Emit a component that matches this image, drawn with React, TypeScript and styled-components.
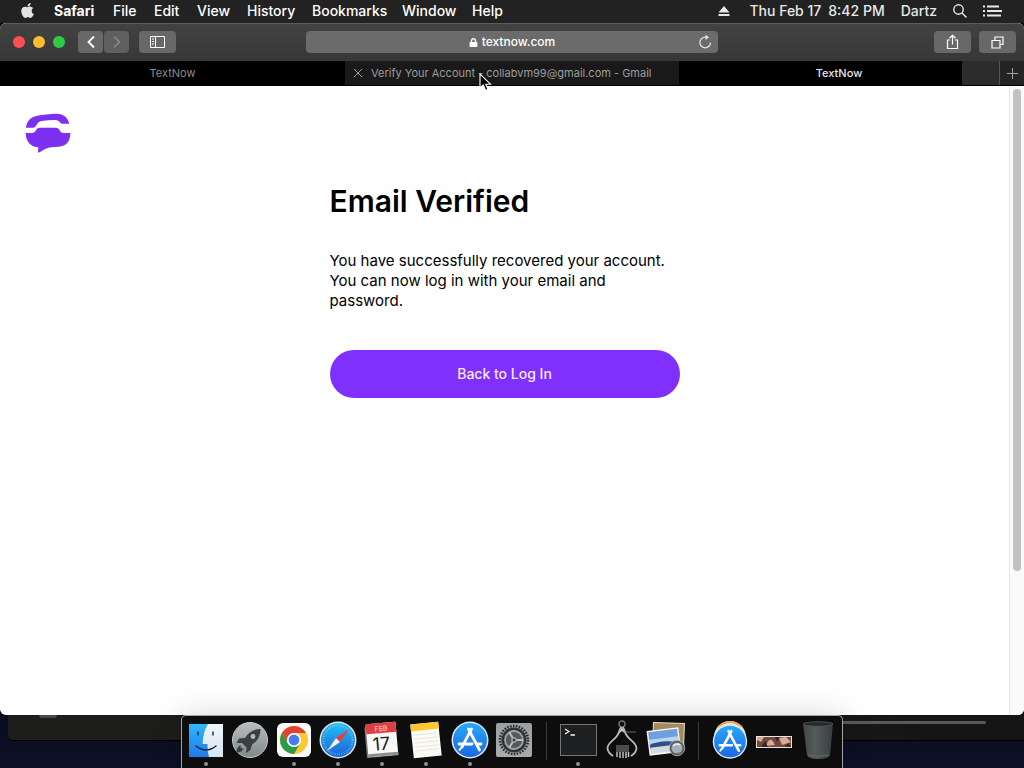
import React from "react";
import styled, { createGlobalStyle, css } from "styled-components";
import { FaApple, FaLock } from "react-icons/fa";

const GlobalStyle = createGlobalStyle`
  * { box-sizing: border-box; }
  body {
    margin: 0;
    background: #000;
    font-family: Inter, "Liberation Sans", sans-serif;
  }
  button, input { font: inherit; color: inherit; border: 0; padding: 0; margin: 0; background: none; }
  svg { display: block; }
`;

const Desktop = styled.div`
  display: flex;
  flex-direction: column;
  min-height: 100vh;
  overflow: hidden;
  background: #000;
`;

/* ---------- menu bar ---------- */

const MenuBar = styled.header`
  display: flex;
  justify-content: space-between;
  align-items: center;
  height: 23px;
  padding: 0 22px 2px 19px;
  background: #222;
  color: #fff;
  font-size: 14px;
  font-weight: 500;
  line-height: 20px;
`;

const Menus = styled.nav`
  display: grid;
  grid-template-columns: 35px 59px 41px 43px 50px 65px 90px 70px auto;
  align-items: center;
`;

const MenuItem = styled.button<{ $bold?: boolean }>`
  text-align: left;
  white-space: nowrap;
  font-weight: ${(p) => (p.$bold ? 700 : 500)};
`;

const StatusItems = styled.div`
  display: flex;
  align-items: center;
  gap: 16px;
  color: #e8e8e8;
  white-space: nowrap;
`;

const Clock = styled.time`
  display: flex;
  gap: 7px;
  margin-left: 3px;
`;

/* ---------- browser window ---------- */

const Window = styled.main`
  display: flex;
  flex-direction: column;
  flex: 1;
  overflow: hidden;
  border-radius: 6px;
  background: #fff;
`;

const Toolbar = styled.div`
  display: grid;
  grid-template-columns: 1fr minmax(200px, 412px) 1fr;
  align-items: center;
  height: 38px;
  padding: 0 8px 1px;
  border-top: 1px solid #5c5c5c;
  background: linear-gradient(#424242, #373737);
  color: #fff;
`;

const ToolGroup = styled.div<{ $end?: boolean }>`
  display: flex;
  align-items: center;
  justify-content: ${(p) => (p.$end ? "flex-end" : "flex-start")};
  gap: ${(p) => (p.$end ? 8 : 10)}px;
`;

const Lights = styled.div`
  display: flex;
  gap: 8px;
  padding: 0 3px 0 5px;
`;

const Light = styled.button<{ $color: string }>`
  width: 12px;
  height: 12px;
  border-radius: 50%;
  background: ${(p) => p.$color};
`;

const NavPair = styled.div`
  display: flex;
  gap: 1px;
`;

const ToolButton = styled.button<{ $narrow?: boolean; $dim?: boolean }>`
  display: flex;
  align-items: center;
  justify-content: center;
  width: ${(p) => (p.$narrow ? 25 : 37)}px;
  height: 22px;
  border-radius: 4px;
  background: ${(p) => (p.$dim ? "#5f5f5f" : "#686868")};
  color: ${(p) => (p.$dim ? "#8b8b8b" : "#fff")};
`;

const AddressBar = styled.div`
  display: grid;
  grid-template-columns: 20px 1fr 20px;
  align-items: center;
  height: 22px;
  border-radius: 4px;
  background: #6b6b6b;
`;

const Address = styled.label`
  display: flex;
  grid-column: 2;
  align-items: center;
  justify-content: center;
  gap: 4px;
`;

const AddressInput = styled.input`
  field-sizing: content;
  font-size: 12px;
  font-weight: 500;
  line-height: 16px;
  outline: none;
`;

const TabBar = styled.div`
  display: flex;
  height: 25px;
  background: #000;
`;

const Tabs = styled.div`
  display: grid;
  flex: 1;
  grid-template-columns: 345fr 334fr 320fr;
`;

const Tab = styled.button<{ $state?: "hover" | "active" }>`
  position: relative;
  display: flex;
  align-items: center;
  justify-content: center;
  gap: 8px;
  overflow: hidden;
  height: 24px;
  white-space: nowrap;
  font-size: 11px;
  line-height: 16px;
  color: #8c8c8c;
  ${(p) =>
    p.$state === "hover" &&
    css`
      justify-content: flex-start;
      padding-left: 8px;
      background: #191919;
      color: #9c9c9c;
    `}
  ${(p) =>
    p.$state === "active" &&
    css`
      font-weight: 500;
      color: #e6e6e6;
    `}
`;

const TabOverflow = styled.span`
  position: absolute;
  right: 0;
  top: 0;
  width: 37px;
  height: 24px;
  background: #2c2c2c;
`;

const NewTab = styled.button`
  display: flex;
  align-items: center;
  justify-content: center;
  width: 25px;
  height: 24px;
  border-left: 1px solid #555;
  background: #242424;
  color: #a0a0a0;
`;

const Viewport = styled.div`
  display: flex;
  flex: 1;
`;

const Page = styled.div`
  flex: 1;
  padding: 27px 24px;
  color: #000;
`;

const HomeLink = styled.a`
  display: inline-block;
  vertical-align: top;
`;

const Card = styled.section`
  width: 100%;
  max-width: 350px;
  margin: 27px auto 0;
`;

const Title = styled.h1`
  margin: 0;
  font-size: 30px;
  font-weight: 600;
  line-height: 40px;
`;

const Message = styled.p`
  margin: 30px 0 39px;
  font-size: 15px;
  line-height: 20px;
`;

const PrimaryButton = styled.button`
  width: 100%;
  height: 48px;
  padding-bottom: 2px;
  border-radius: 24px;
  background: #7f30fc;
  color: #fbe9ff;
  font-size: 14px;
  font-weight: 500;
`;

const ScrollTrack = styled.div`
  width: 15px;
  padding: 3px 2px 0 3px;
  border-left: 1px solid #e6e6e6;
  background: #fafafa;
`;

const ScrollThumb = styled.div`
  width: 8px;
  height: 77%;
  border-radius: 4px;
  background: #c1c1c1;
`;

/* ---------- wallpaper strip and dock ---------- */

const Shelf = styled.footer`
  position: relative;
  display: flex;
  justify-content: center;
  height: 53px;
  background: linear-gradient(#090c1c, #0e1029);
`;

const BackWindow = styled.div`
  position: absolute;
  top: 0;
  left: 8px;
  right: 0;
  height: 26px;
  border-bottom: 1px solid #000;
  border-radius: 0 0 0 5px;
  background: linear-gradient(90deg, #1d1d1b 60%, #151515 90%);
`;

const BackScroll = styled.div`
  position: absolute;
  top: 6px;
  right: 38px;
  width: 200px;
  height: 3px;
  border-radius: 2px;
  background: #5a5a5a;
`;

const BackHandle = styled.div`
  position: absolute;
  top: 0;
  left: 31px;
  width: 18px;
  height: 3px;
  border-radius: 0 0 9px 9px;
  background: #4a4a4a;
`;

const Dock = styled.nav`
  position: relative;
  display: flex;
  padding: 2px 2px 0;
  border: 1px solid #a2a2a2;
  border-bottom: 0;
  border-radius: 5px 5px 0 0;
  background: #0d0d0d;
  box-shadow: 0 0 32px rgba(0, 0, 0, 0.16);
`;

const DockItem = styled.button<{ $running?: boolean }>`
  display: flex;
  flex-direction: column;
  align-items: center;
  width: 44px;
  &::after {
    content: "";
    width: 4px;
    height: 4px;
    border-radius: 50%;
    background: ${(p) => (p.$running ? "#929292" : "transparent")};
  }
`;

const DockDivider = styled.span`
  width: 1px;
  height: 38px;
  margin: 4px 9px 0 10px;
  background: #3b3b3b;
`;

const Pointer = styled.svg`
  position: absolute;
  left: 479px;
  top: 73px;
  pointer-events: none;
`;

/* ---------- drawings ---------- */

const Line = ({ w, h, d, sw = 1 }: { w: number; h: number; d: string; sw?: number }) => (
  <svg width={w} height={h} viewBox={`0 0 ${w} ${h}`} fill="none" stroke="currentColor" strokeWidth={sw}>
    <path d={d} />
  </svg>
);

const TextNowLogo = () => (
  <svg width="48" height="41" viewBox="72 340 144 123" fill="#7c31f0">
    <path d="M78 384C80 366 90 352 112 348C128 345 150 343 168 342C190 341 204 354 208 372H186C180 372 178 361 166 361C152 361 138 362 124 364C110 366 110 383 101 384Z" />
    <path d="M77 400H97C108 400 106 384 120 384H167C181 384 178 400 190 400H211C211 426 198 440 176 441C160 442 148 441 137 447C129 451 122 456 114 459L115 443C94 443 77 426 77 400Z" />
  </svg>
);

const Icon = ({ children }: { children: React.ReactNode }) => (
  <svg width="44" height="44" viewBox="0 0 44 44">
    {children}
  </svg>
);

const Finder = () => (
  <Icon>
    <defs>
      <linearGradient id="finderL" x2="0" y2="1"><stop stopColor="#31b8fa" /><stop offset="1" stopColor="#2277ea" /></linearGradient>
      <linearGradient id="finderR" x2="0" y2="1"><stop stopColor="#f3f6fa" /><stop offset="1" stopColor="#d6e3f2" /></linearGradient>
    </defs>
    <rect x="5" y="6" width="34" height="33" fill="url(#finderL)" />
    <path d="M24 6H39V39H25Q23 33 23.500 26H18.500Q19 14 24 6Z" fill="url(#finderR)" />
    <path d="M14 14V17M29 14V17" stroke="#123a63" strokeWidth="1.500" strokeLinecap="round" />
    <path d="M12 28Q22 36 32 28" fill="none" stroke="#14233a" strokeWidth="1.500" strokeLinecap="round" />
  </Icon>
);

const Launchpad = () => (
  <Icon>
    <defs><linearGradient id="pad" x2="0" y2="1"><stop stopColor="#b9bec1" /><stop offset="1" stopColor="#82878a" /></linearGradient></defs>
    <circle cx="22" cy="22" r="17.500" fill="url(#pad)" stroke="#c6c9cb" />
    <path d="M32.500 11C26 11 20.500 14 17 20L11 20.500L8.500 25L14 25L18.500 29.500L18 35L22.500 32L24 26.500C30 23 32.500 17 32.500 11Z" fill="#3b4045" />
    <path d="M13 27C10 28 8.500 31 8.500 34.500C12 34.500 15 33 16 30L14 31L14 29L12 30Z" fill="#3b4045" />
    <circle cx="25" cy="18.500" r="2.400" fill="#b5babd" />
  </Icon>
);

const Chrome = () => (
  <Icon>
    <rect x="5" y="5" width="34" height="34" rx="6" fill="#fafafa" />
    <circle cx="22" cy="22" r="14" fill="#fcc934" />
    <path d="M9.900 15A14 14 0 0 1 34.100 15H22A7 7 0 0 0 15.900 25.500Z" fill="#dc4437" />
    <path d="M9.900 15A14 14 0 0 0 22 36L28 25.500A7 7 0 0 1 15.900 25.500Z" fill="#2c9a4b" />
    <circle cx="22" cy="22" r="7" fill="#fff" />
    <circle cx="22" cy="22" r="5.400" fill="#437ff0" />
  </Icon>
);

const Safari = () => (
  <Icon>
    <defs><linearGradient id="saf" x2="0" y2="1"><stop stopColor="#25bff4" /><stop offset="1" stopColor="#1b62d6" /></linearGradient></defs>
    <circle cx="22" cy="22" r="18.500" fill="#dfe4e8" />
    <circle cx="22" cy="22" r="17" fill="url(#saf)" />
    <circle cx="22" cy="22" r="14.500" fill="none" stroke="#a5dcf8" strokeWidth="2" strokeDasharray="0.500 1.800" />
    <path d="M33 11L24 24L20 20Z" fill="#f03a3a" />
    <path d="M11 33L24 24L20 20Z" fill="#f2f2f2" />
  </Icon>
);

const Calendar = () => (
  <Icon>
    <g transform="rotate(-5 22 22)">
      <path d="M5.500 9L8 5V36H37V38.500H5.500Z" fill="#777" />
      <rect x="7" y="5" width="30" height="33" rx="1" fill="#f8f8f8" />
      <rect x="7" y="5" width="30" height="10" fill="#df3e41" />
      <rect x="7" y="35" width="30" height="3" fill="#8e8e8e" />
      <text x="22" y="13" fontSize="7" textAnchor="middle" fill="#ffdada">FEB</text>
      <text x="21" y="32" fontSize="18" textAnchor="middle" fill="#222">17</text>
    </g>
  </Icon>
);

const Notes = () => (
  <Icon>
    <g transform="rotate(-6 22 22)">
      <rect x="8" y="5" width="28" height="34" fill="#fbfaf5" />
      <rect x="8" y="5" width="28" height="7" fill="#fbc92f" />
      <path d="M10 16H34M10 20H34M10 24H34M10 28H34M10 32H34" stroke="#e2e2dd" strokeWidth="0.800" />
    </g>
  </Icon>
);

const StoreGlyph = () => (
  <g>
    <circle cx="22" cy="22" r="18.500" fill="#d9ebfa" />
    <circle cx="22" cy="22" r="17" fill="url(#store)" />
    <path d="M23.500 11L14 29M20.500 11L31.500 32M11 26H24M28.500 26H33" stroke="#fff" strokeWidth="2.800" strokeLinecap="round" />
    <path d="M13 30L11.500 32" stroke="#fff" strokeWidth="2" strokeLinecap="round" />
  </g>
);

const storeGradient = (
  <defs><linearGradient id="store" x2="0" y2="1"><stop stopColor="#27a9f8" /><stop offset="1" stopColor="#1c66e4" /></linearGradient></defs>
);

const AppStore = () => <Icon>{storeGradient}<StoreGlyph /></Icon>;

const StoreDownloads = () => (
  <Icon>
    {storeGradient}
    <circle cx="22" cy="19" r="16" fill="#e9e4d2" />
    <path d="M10 9Q22 -1 34 9" stroke="#efa553" strokeWidth="2" fill="none" />
    <g transform="translate(1.500 3) scale(0.930)"><StoreGlyph /></g>
  </Icon>
);

const Preferences = () => (
  <Icon>
    <defs><linearGradient id="pref" x2="0" y2="1"><stop stopColor="#98a0a4" /><stop offset="1" stopColor="#a9aca8" /></linearGradient></defs>
    <rect x="4" y="5" width="36" height="34" rx="2" fill="url(#pref)" />
    <circle cx="22" cy="22" r="14" fill="none" stroke="#292b2d" strokeWidth="2.500" strokeDasharray="1.600 1.330" />
    <circle cx="22" cy="22" r="12.500" fill="#303234" />
    <circle cx="22" cy="22" r="9" fill="#555a5d" stroke="#a1a5a7" strokeWidth="1.800" />
    <path d="M22 22L17 14M22 22H31M22 22L17 30" stroke="#b9bdbf" strokeWidth="2" />
    <circle cx="22" cy="22" r="2.800" fill="#a1a5a7" />
    <circle cx="22" cy="22" r="1.300" fill="#303234" />
  </Icon>
);

const Terminal = () => (
  <Icon>
    <rect x="4.500" y="6.500" width="36" height="31" fill="#1d1f20" stroke="#777" />
    <path d="M9 11L13 13.500L9 16M14.500 17H19" fill="none" stroke="#f4f4f4" strokeWidth="1.300" />
  </Icon>
);

const Caliper = () => (
  <Icon>
    <circle cx="22" cy="6" r="3" fill="none" stroke="#6d6d6d" strokeWidth="1.500" />
    <path d="M21 9L18.500 15C17 21 7.500 24 7.500 30C7.500 34 10 36 13 38M23 9L25.500 15C27 21 36.500 24 36.500 30C36.500 34 34 36 31 38" fill="none" stroke="#b9b9b9" strokeWidth="1.800" />
    <path d="M18.500 16L22 9L25.500 16L22 13Z" fill="#ccc" />
    <path d="M25 14H36" stroke="#666" />
    <rect x="16" y="27" width="13" height="7" fill="#4b4b4b" />
    <path d="M17 34V39M20 34V40M23 34V40M26 34V40M28.500 34V39" stroke="#c9c9c9" strokeWidth="1.400" />
  </Icon>
);

const Preview = () => (
  <Icon>
    <rect x="9" y="5" width="31" height="25" fill="#a38b60" stroke="#ece2c6" transform="rotate(2 24 17)" />
    <g transform="rotate(-7 20 24)">
      <rect x="4" y="11" width="32" height="25" fill="#f4f4f4" />
      <rect x="5.500" y="12.500" width="29" height="12" fill="#6f9fdf" />
      <rect x="5.500" y="20" width="29" height="5" fill="#b9d6ef" />
      <path d="M5.500 25Q18 21 34.500 26V30H5.500Z" fill="#314f87" />
      <rect x="5.500" y="28" width="29" height="6" fill="#d3d9dc" />
    </g>
    <circle cx="33" cy="30" r="6.500" fill="#9eabb5" fillOpacity="0.900" stroke="#5c5f61" strokeWidth="2" />
    <circle cx="33" cy="30" r="7.800" fill="none" stroke="#b9bcbe" strokeWidth="0.800" />
    <path d="M29.500 28Q32 24.500 36 27" stroke="#edf1f4" strokeWidth="1.500" fill="none" />
  </Icon>
);

const Picture = () => (
  <Icon>
    <rect x="4.500" y="18.500" width="35" height="11" fill="#74483d" stroke="#e8e5e0" />
    <path d="M5 19H12L9 24L5 22ZM14 28Q18 16 23 27ZM27 20L34 19L39 24L30 27Z" fill="#d9ab92" />
    <path d="M9 29L13 23L16 29ZM23 19H28L25 24ZM33 29L36 25L39 29Z" fill="#362a25" />
  </Icon>
);

const Trash = () => (
  <Icon>
    <defs><linearGradient id="trash"><stop stopColor="#444948" /><stop offset=".4" stopColor="#555b5b" /><stop offset="1" stopColor="#383d3d" /></linearGradient></defs>
    <path d="M7 5H37L34 37Q33 41 22 41Q12 41 11 37Z" fill="url(#trash)" />
    <ellipse cx="22" cy="6" rx="15" ry="2.200" fill="#242828" stroke="#4b5050" />
    <path d="M12 37Q22 40 33 37" stroke="#656b6b" fill="none" />
  </Icon>
);

type DockEntry = { name: string; icon: React.FC; running?: boolean };

const dockGroups: DockEntry[][] = [
  [
    { name: "Finder", icon: Finder, running: true },
    { name: "Launchpad", icon: Launchpad },
    { name: "Chrome", icon: Chrome, running: true },
    { name: "Safari", icon: Safari, running: true },
    { name: "Calendar", icon: Calendar, running: true },
    { name: "Notes", icon: Notes, running: true },
    { name: "App Store", icon: AppStore, running: true },
    { name: "System Preferences", icon: Preferences },
  ],
  [
    { name: "Terminal", icon: Terminal, running: true },
    { name: "System Information", icon: Caliper },
    { name: "Preview", icon: Preview },
  ],
  [
    { name: "Downloads", icon: StoreDownloads },
    { name: "Picture", icon: Picture },
    { name: "Trash", icon: Trash },
  ],
];

const menus = ["File", "Edit", "View", "History", "Bookmarks", "Window", "Help"];

export default function App() {
  return (
    <Desktop>
      <GlobalStyle />
      <MenuBar>
        <Menus aria-label="Menu bar">
          <MenuItem aria-label="Apple menu"><FaApple size={17} color="#e4e4e4" /></MenuItem>
          <MenuItem $bold>Safari</MenuItem>
          {menus.map((m) => <MenuItem key={m}>{m}</MenuItem>)}
        </Menus>
        <StatusItems>
          <svg width="12" height="12" viewBox="0 0 12 12" fill="currentColor"><path d="M6 1L11.500 7.500H.5ZM.5 9H11.500V11H.5Z" /></svg>
          <Clock><span>Thu Feb 17</span><span>8:42 PM</span></Clock>
          <span>Dartz</span>
          <svg width="14" height="14" viewBox="0 0 14 14" fill="none" stroke="currentColor" strokeWidth="1.400"><circle cx="5.500" cy="5.500" r="4.700" /><path d="M9 9L13.500 13.500" /></svg>
          <svg width="19" height="12" viewBox="0 0 19 12" stroke="currentColor" strokeWidth="2"><path d="M0 1.500H2M0 6H2M0 10.500H2M4 1.500H16M4 6H19M4 10.500H18" /></svg>
        </StatusItems>
      </MenuBar>

      <Window>
        <Toolbar>
          <ToolGroup>
            <Lights>
              <Light $color="#fc4f54" aria-label="Close" />
              <Light $color="#fdbb2e" aria-label="Minimize" />
              <Light $color="#32cb47" aria-label="Zoom" />
            </Lights>
            <NavPair>
              <ToolButton $narrow aria-label="Back"><Line w={8} h={14} sw={1.8} d="M7 1.500L1.500 7L7 12.500" /></ToolButton>
              <ToolButton $narrow $dim aria-label="Forward"><Line w={8} h={14} sw={1.6} d="M1 1.500L6.500 7L1 12.500" /></ToolButton>
            </NavPair>
            <ToolButton aria-label="Sidebar"><Line w={15} h={12} d="M.5 .5H14.500V11.500H.5ZM5.500 .5V11.500M2 3H4M2 5.500H4M2 8H4" /></ToolButton>
          </ToolGroup>
          <AddressBar>
            <Address>
              <FaLock size={9} aria-hidden />
              <AddressInput aria-label="Address" defaultValue="textnow.com" />
            </Address>
            <button aria-label="Reload">
              <svg width="14" height="14" viewBox="0 0 14 14" fill="none" stroke="#e4e4e4" strokeWidth="1.200"><path d="M12.500 7.500A5.300 5.300 0 1 1 7.200 2.200H9" /><path d="M7.500 -.2L11 2.300L7.500 5Z" fill="#e4e4e4" stroke="none" /></svg>
            </button>
          </AddressBar>
          <ToolGroup $end>
            <ToolButton aria-label="Share"><Line w={13} h={16} sw={1.2} d="M4 6H1.500V14.500H11.500V6H9M6.500 10.500V1.500M3.500 4.200L6.500 1.300L9.500 4.200" /></ToolButton>
            <ToolButton aria-label="Tab overview"><Line w={13} h={13} sw={1.2} d="M1 4.500H9V12H1ZM4 4.500V1H12V8.500H9" /></ToolButton>
          </ToolGroup>
        </Toolbar>

        <TabBar>
          <Tabs>
            <Tab>TextNow</Tab>
            <Tab $state="hover">
              <Line w={10} h={10} d="M1 1L9 9M9 1L1 9" />
              Verify Your Account - collabvm99@gmail.com - Gmail
            </Tab>
            <Tab $state="active">TextNow<TabOverflow /></Tab>
          </Tabs>
          <NewTab aria-label="New tab"><Line w={11} h={11} d="M5.500 0V11M0 5.500H11" /></NewTab>
        </TabBar>

        <Viewport>
          <Page>
            <HomeLink href="#" aria-label="TextNow home"><TextNowLogo /></HomeLink>
            <Card>
              <Title>Email Verified</Title>
              <Message>
                You have successfully recovered your account. You can now log in with your email and password.
              </Message>
              <PrimaryButton>Back to Log In</PrimaryButton>
            </Card>
          </Page>
          <ScrollTrack><ScrollThumb /></ScrollTrack>
        </Viewport>
      </Window>

      <Shelf>
        <BackWindow><BackHandle /><BackScroll /></BackWindow>
        <Dock aria-label="Dock">
          {dockGroups.map((group, i) => (
            <React.Fragment key={i}>
              {i > 0 && <DockDivider />}
              {group.map(({ name, icon: Glyph, running }) => (
                <DockItem key={name} aria-label={name} $running={running}><Glyph /></DockItem>
              ))}
            </React.Fragment>
          ))}
        </Dock>
      </Shelf>

      <Pointer width="13" height="19" viewBox="0 0 13 19">
        <path d="M1 1V15L4.300 12L6.600 17.500L9 16.500L6.800 11.200H11.500Z" fill="#000" stroke="#fff" strokeWidth="1.100" />
      </Pointer>
    </Desktop>
  );
}
